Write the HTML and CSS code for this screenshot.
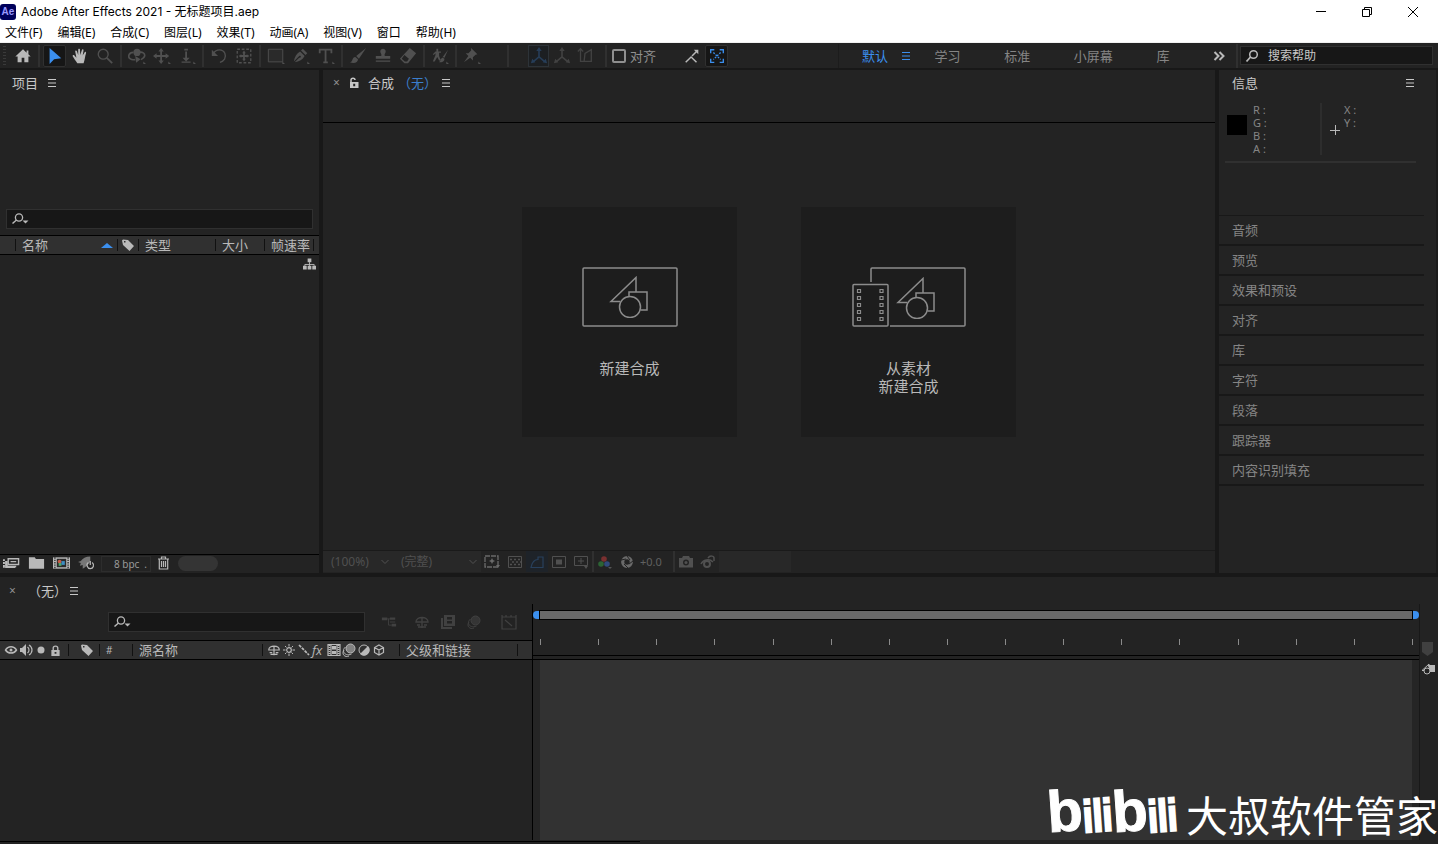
FILE: index.html
```html
<!DOCTYPE html>
<html lang="zh-CN">
<head>
<meta charset="utf-8">
<title>Adobe After Effects 2021 - 无标题项目.aep</title>
<link rel="stylesheet" href="styles.css">
</head>
<body>
<svg class="sprite" aria-hidden="true">
  <symbol id="menu" viewBox="0 0 10 10"><path d="M1 1.500h8M1 5h8M1 8.500h8" stroke="currentColor" fill="none"/></symbol>
  <symbol id="home" viewBox="0 0 20 20"><path fill="currentColor" d="M10 2.500 1.500 10.500H4V17h4.500v-5h3v5H16v-6.500h2.500L16 8.100V4h-2v2.300z"/></symbol>
  <symbol id="arrow" viewBox="0 0 20 20"><path fill="currentColor" d="M4 1v18l5-5.500 8-1z"/></symbol>
  <symbol id="hand" viewBox="0 0 20 20"><path fill="currentColor" d="M7 18C5 15 3.500 13 2 10.500c-.6-1.300 1-2 1.800-1L6 12 4.700 5c-.2-1.400 1.500-1.600 1.900-.3L8 9V3c0-1.500 2-1.500 2 0l.3 6L12 3.500c.4-1.400 2.100-1 1.900.4L13 9.500l2-3.500c.7-1.200 2.200-.4 1.700.9C15.500 10 15.500 14 14 18z"/></symbol>
  <symbol id="zoom" viewBox="0 0 20 20"><circle cx="8" cy="8" r="5.500" fill="none" stroke="currentColor" stroke-width="1.500"/><path d="m12 12 6 6" stroke="currentColor" stroke-width="2"/></symbol>
  <symbol id="orbit" viewBox="0 0 20 20"><path fill="none" stroke="currentColor" stroke-width="1.800" d="M8 14c-5 1-8-2-7-5 .8-2 3-3 5-3M12 6c4-1 7 1 6.500 4-.3 2-2 3-4 4"/><circle cx="10" cy="6" r="4" fill="currentColor"/><path fill="currentColor" d="m8 10 6 3.500-5 4zM17 19v-3l3 3z"/></symbol>
  <symbol id="move" viewBox="0 0 20 20"><path fill="currentColor" d="m9 1 3 4h-2v4h4V7l4 3-4 3v-2h-4v4h2l-3 4-3-4h2v-4H4v2l-4-3 4-3v2h4V5H6zM17 19v-3l3 3z"/></symbol>
  <symbol id="dolly" viewBox="0 0 20 20"><path fill="currentColor" d="M7 2h4v2H7zM8 5h2v7h3l-4 4-4-4h3zM4 16h10v1.500H4zM17 19v-3l3 3z"/></symbol>
  <symbol id="rotate" viewBox="0 0 20 20"><path fill="none" stroke="currentColor" stroke-width="1.500" d="M4 7c3-5 10-5 12.500 0 2 5-1 9-5.500 10"/><path fill="currentColor" d="M2 3v7h7z"/></symbol>
  <symbol id="behind" viewBox="0 0 20 20"><path fill="none" stroke="currentColor" stroke-width="1.500" stroke-dasharray="3 2" d="M2.500 2.500h15v15h-15z"/><path fill="currentColor" d="m10 4 2 3h-1v2h2V8l3 2-3 2v-1h-2v2h1l-2 3-2-3h1v-2H7v1l-3-2 3-2v1h2V7H8z"/></symbol>
  <symbol id="rect" viewBox="0 0 20 20"><path fill="#2a2a2a" stroke="currentColor" d="M1.500 2.500h16v14h-16z"/><path fill="currentColor" d="M17 19v-3l3 3z"/></symbol>
  <symbol id="pen" viewBox="0 0 20 20"><path fill="currentColor" d="m12 2 5 5-2 2-5-5zM9 5l5 5c-2 4-6 6-11 7l5-5c3 0 2-3 0-2l-6 6c1-5 3-9 7-11zM17 19v-3l3 3z"/></symbol>
  <symbol id="type" viewBox="0 0 20 20"><path fill="none" stroke="currentColor" stroke-width="2" d="M3 7V3h13v4M9.500 3v14M7 17h5"/><path fill="currentColor" d="M17 19v-3l3 3z"/></symbol>
  <symbol id="brush" viewBox="0 0 20 20"><path fill="currentColor" d="M19 1 8 10l3 3zM7 11c-4 0-2 5-6 6 5 2 9 0 9-3.500z"/></symbol>
  <symbol id="stamp" viewBox="0 0 20 20"><path fill="currentColor" d="M7 5c0-4 6-4 6 0 0 2-2 3-1 5h6v3H2v-3h6c1-2-1-3-1-5zM2 15h16v1.500H2z"/></symbol>
  <symbol id="eraser" viewBox="0 0 20 20"><path fill="currentColor" d="m12 1 7 6-9 11H6l-5-5zM6 9l-3 4 3.500 3H9l2-3z"/></symbol>
  <symbol id="roto" viewBox="0 0 20 20"><path fill="currentColor" d="M6 2h2v3h3v1.500H9V10l2 5H9l-2-4-3 5H2l3-7V7L3 9 2 8l3-3h1zM19 3l-6 8 2 1zM13 12c-2 0-2 3-4 5 4 0 6-1 6-4zM17 19v-3l3 3z"/></symbol>
  <symbol id="pin" viewBox="0 0 20 20"><path fill="currentColor" d="m9 1 7 7-2 .5-3 3V15l-3-3-7 5 5-7-3-3h3l3-3zM17 19v-3l3 3z"/></symbol>
  <symbol id="axis" viewBox="0 0 20 20"><path fill="none" stroke="currentColor" stroke-width="1.800" d="M10 3v8l-6 5M10 11l6 5"/><path fill="currentColor" d="m10 0 3 4.500H7zM1 18l1.500-5 3.500 4zM19 18l-5-1 3.500-4z"/></symbol>
  <symbol id="view" viewBox="0 0 20 20"><path fill="none" stroke="currentColor" stroke-width="1.500" d="M5 3v13h12V3l-7 4-1 9M2 5l3-3 3 3"/></symbol>
  <symbol id="snap" viewBox="0 0 20 20"><path fill="none" stroke="currentColor" stroke-width="1.600" d="m3 17 6-6 6 6M10 10l5-5"/><path fill="currentColor" d="M12 3h5v5z"/></symbol>
  <symbol id="bounds" viewBox="0 0 20 20"><path fill="none" stroke="currentColor" stroke-width="1.500" d="M3 7V3h4M13 3h4v4M17 13v4h-4M7 17H3v-4"/><path stroke="currentColor" stroke-width="1.500" stroke-dasharray="2 1.500" d="m6 6 8 8M14 6l-8 8"/></symbol>
  <symbol id="chev2" viewBox="0 0 12 10"><path fill="none" stroke="currentColor" stroke-width="2" d="m1.500 1 4 4-4 4M6.500 1l4 4-4 4"/></symbol>
  <symbol id="search" viewBox="0 0 14 14"><circle cx="8.500" cy="5.500" r="3.800" fill="none" stroke="currentColor" stroke-width="1.500"/><path d="M5.500 8 1.500 12.500" stroke="currentColor" stroke-width="1.800"/></symbol>
  <symbol id="searchd" viewBox="0 0 18 14"><circle cx="8" cy="5.500" r="3.600" fill="none" stroke="currentColor" stroke-width="1.300"/><path d="m5.500 8-4 3.500" stroke="currentColor" stroke-width="1.500"/><path fill="currentColor" d="M11.500 8.500h6l-3 3z"/></symbol>
  <symbol id="lock" viewBox="0 0 12 12"><path fill="none" stroke="currentColor" stroke-width="1.500" d="M3.500 6V3.500c0-3 5-3 5 0V6"/><path fill="currentColor" fill-rule="evenodd" d="M1.500 5.500h9V12h-9zM5 7.500v2h2v-2z"/></symbol>
  <symbol id="unlock" viewBox="0 0 12 12"><path fill="none" stroke="currentColor" stroke-width="1.500" d="M3 5.500V3c0-2.500 4-2.500 4 0"/><path fill="currentColor" fill-rule="evenodd" d="M2 5h8.500v6H2zM5.200 6.700v2.500h2V6.700z"/></symbol>
  <symbol id="tag" viewBox="0 0 12 12"><path fill="currentColor" fill-rule="evenodd" d="M0 1.500 1 .5 6 1l6 6-4.500 5L1 6zM2 2v1.500h1.500V2z"/></symbol>
  <symbol id="tree" viewBox="0 0 14 12"><path fill="currentColor" d="M5 0h4v4H5zM0 8h4v4H0zM5 8h4v4H5zM10 8h4v4h-4z"/><path fill="none" stroke="currentColor" d="M7 4v4M2 8V6.500h10V8"/></symbol>
  <symbol id="interpret" viewBox="0 0 18 14"><path fill="none" stroke="currentColor" stroke-width="1.500" d="M5.500 2.500h11v6h-11z"/><path fill="none" stroke="currentColor" stroke-width="1.500" d="M8 5.500h6M3 5v6.500h10"/><path fill="currentColor" d="M0 3h2v2H0zM0 6h2v2H0zM0 9h2v3H0zM3 5h2v5h9v1.500H3z"/></symbol>
  <symbol id="folder" viewBox="0 0 14 12"><path fill="currentColor" d="M.500 1h5l1 1.500H13.500V11H.500z"/></symbol>
  <symbol id="comp" viewBox="0 0 18 14"><path fill="currentColor" d="M0 1h18v12H0z"/><path fill="#2b2b2b" d="M4 2.500h10v9H4z"/><path stroke="#333" stroke-width="1.500" stroke-dasharray="1.500 1" d="M2 1v12M16 1v12"/><circle cx="7" cy="5.500" r="2" fill="#c45b45"/><path fill="#4fa66a" d="M6 7h3v3H6z"/><path fill="#3e8ec4" d="M9 5h3.500v4H9z"/></symbol>
  <symbol id="rocket" viewBox="0 0 18 14"><path fill="#777" d="M13 0C8 0 5 2 3 5L0 6l3 1-1 3 3-1v4c3-1 5-4 8-7z"/><path fill="none" stroke="currentColor" stroke-width="1.300" d="M11 6.500c-3 2-1 6.500 2 6.500s5-4 2-6.500M13 5v4"/></symbol>
  <symbol id="trash" viewBox="0 0 12 14"><path fill="none" stroke="currentColor" stroke-width="1.200" d="M.500 3h11M4 3V1h4v2M1.800 3v10h8.400V3M4 5v6M6 5v6M8 5v6"/></symbol>
  <symbol id="chev" viewBox="0 0 8 6"><path fill="none" stroke="currentColor" d="m.5 1 3.500 3.500L7.500 1"/></symbol>
  <symbol id="fastprev" viewBox="0 0 16 14"><path fill="none" stroke="currentColor" stroke-width="1.300" stroke-dasharray="5 1" d="M1 1h13v11H1z"/><path fill="currentColor" d="m8 3 1 2 2 1-2 1-1 2-1-2-2-1 2-1zM12 10h4l-2 3z"/></symbol>
  <symbol id="grid" viewBox="0 0 16 14"><path fill="none" stroke="currentColor" d="M1.500 1.500h13v11h-13z"/><path stroke="currentColor" stroke-width="1.500" stroke-dasharray="2 2" d="M3 4.500h11M5 7h9M3 9.500h11"/></symbol>
  <symbol id="mask" viewBox="0 0 16 14"><path fill="none" stroke="currentColor" stroke-width="1.200" d="M2 12.500c1-5 4-8 7-8V2h5v10.500z"/></symbol>
  <symbol id="roi" viewBox="0 0 16 14"><path fill="none" stroke="currentColor" d="M1.500 1.500h13v11h-13z"/><path fill="currentColor" d="M5 4.500h6v5H5z"/></symbol>
  <symbol id="guides" viewBox="0 0 16 14"><path fill="none" stroke="currentColor" d="M1.500 1.500h13v9h-13zM8 3v6M5 6h6"/><path fill="currentColor" d="M11 11h4l-2 3z"/></symbol>
  <symbol id="rgb" viewBox="0 0 16 14"><circle cx="7" cy="4" r="2.800" fill="#7a3030"/><circle cx="4" cy="9" r="2.800" fill="#2c6334"/><circle cx="10" cy="9" r="2.800" fill="#304a7c"/><path fill="#555" d="M11 12h4l-2 2z"/></symbol>
  <symbol id="aperture" viewBox="0 0 14 14"><circle cx="7" cy="7" r="4.300" fill="none" stroke="currentColor" stroke-width="3.200"/><path stroke="#232323" d="m1 5 5-1M7 1l3 4M13 6l-4 3M8 13l-4-4"/></symbol>
  <symbol id="camera" viewBox="0 0 16 14"><path fill="currentColor" fill-rule="evenodd" d="M1 3h3l1-2h6l1 2h3v9.500H1zM8 4.500a3 3 0 1 0 0 6 3 3 0 0 0 0-6z"/><circle cx="8" cy="7.500" r="1.500" fill="currentColor"/></symbol>
  <symbol id="snapshot" viewBox="0 0 16 14"><circle cx="7" cy="9" r="3" fill="none" stroke="currentColor" stroke-width="2"/><path fill="none" stroke="currentColor" stroke-width="1.500" d="M1 9c2-4 8-6 12-2M8 3c2-3 6-2 6 0v3"/></symbol>
  <symbol id="flow" viewBox="0 0 18 14"><path fill="currentColor" d="M1 2h6v3H1zM10 2h6v2.500h-6zM12 9h5v3h-5z"/><path fill="none" stroke="currentColor" d="M7 3.500h3M8.500 3.500v7H12M10 7h6"/></symbol>
  <symbol id="shy" viewBox="0 0 16 14"><path fill="none" stroke="currentColor" stroke-width="1.400" d="M2 7c0-6 12-6 12 0zM8 3v10M3 10h3M10 10h3M4 12h8"/></symbol>
  <symbol id="sun" viewBox="0 0 14 14"><circle cx="7" cy="7" r="2.300" fill="none" stroke="currentColor" stroke-width="1.200"/><path stroke="currentColor" d="M7 1v2.500M7 10.500V13M1 7h2.500M10.500 7H13M3 3l1.500 1.500M9.500 9.500 11 11M11 3 9.500 4.500M4.500 9.500 3 11"/></symbol>
  <symbol id="quality" viewBox="0 0 14 14"><path stroke="currentColor" stroke-width="1.700" stroke-dasharray="3 1" d="m2 2 10 10"/></symbol>
  <symbol id="frames" viewBox="0 0 14 14"><path fill="none" stroke="currentColor" stroke-width="1.200" d="M1 1.500h12v11H1zM4 1.500v11M10 1.500v11"/><path fill="currentColor" d="M5 3h4v3.500H5zM5 8h4v3H5z"/><path stroke="currentColor" stroke-dasharray="1 1" stroke-width="2" d="M2.500 2v10M11.500 2v10"/></symbol>
  <symbol id="blend" viewBox="0 0 16 14"><path fill="currentColor" d="M4 0h11v11H4zM1 3h2v9h9v2H1z"/><path fill="#232323" d="M7 2h5v2.500H7zM7 6h5v2.500H7z"/></symbol>
  <symbol id="blur" viewBox="0 0 14 14"><circle cx="8.500" cy="5.500" r="4.500" fill="currentColor" opacity=".6"/><circle cx="8.500" cy="5.500" r="4.500" fill="none" stroke="currentColor"/><path fill="none" stroke="currentColor" d="M3.500 4c-5 4 0 10 6 7M2 7c-3 4 1 8 5 6"/></symbol>
  <symbol id="adjust" viewBox="0 0 14 14"><circle cx="7" cy="7" r="5" fill="none" stroke="currentColor"/><path fill="currentColor" d="M11 3A5.600 5.600 0 1 1 3 11z"/></symbol>
  <symbol id="cube" viewBox="0 0 14 14"><path fill="none" stroke="currentColor" stroke-width="1.200" d="m7 2 4.500 2.500v5L7 12 2.500 9.500v-5zM2.500 4.500 7 7l4.500-2.500M7 7v5"/></symbol>
  <symbol id="graph" viewBox="0 0 18 16"><path fill="none" stroke="currentColor" stroke-width="1.200" d="M2 3h14v12H2zM2 1v2M6 1v2M11 1v2M16 1v2M5 6l7 6"/></symbol>
  <symbol id="eye" viewBox="0 0 14 14"><path fill="none" stroke="currentColor" stroke-width="1.500" d="M1.500 7C4 2.500 10 2.500 12.500 7 10 11 4 11 1.500 7z"/><circle cx="7" cy="7" r="1.500" fill="currentColor"/></symbol>
  <symbol id="sound" viewBox="0 0 14 14"><path fill="currentColor" d="M1 5h2l4-4v12L3 9H1z"/><path fill="none" stroke="currentColor" stroke-width="1.200" d="M8.500 4c2 1.500 2 4.500 0 6M10 2c4 2.500 4 7.500 0 10"/></symbol>
  <symbol id="dot" viewBox="0 0 14 14"><circle cx="7" cy="7" r="3.500" fill="currentColor"/></symbol>
  <symbol id="shapes" viewBox="0 0 40 42"><path fill="none" stroke="currentColor" stroke-width="1.500" d="M11 25.500H2L27 1.500V16M20 20v-4h18v18h-6.500"/><circle cx="21" cy="31" r="10.500" fill="none" stroke="currentColor" stroke-width="1.500"/></symbol>
</svg>

<header class="titlebar">
  <span class="app-badge">Ae</span>
  <h1 class="title">Adobe After Effects 2021 - 无标题项目.aep</h1>
  <div class="window-buttons">
    <button aria-label="最小化"><svg viewBox="0 0 12 12"><path d="M1 5.500h10"/></svg></button>
    <button aria-label="还原"><svg viewBox="0 0 12 12"><path d="M1.500 3.500h7v7h-7zM3.500 3.500v-2h7v7h-2"/></svg></button>
    <button aria-label="关闭"><svg viewBox="0 0 12 12"><path d="m1 1 10 10M11 1 1 11"/></svg></button>
  </div>
</header>
<nav class="menubar">
  <button>文件(F)</button><button>编辑(E)</button><button>合成(C)</button><button>图层(L)</button><button>效果(T)</button><button>动画(A)</button><button>视图(V)</button><button>窗口</button><button>帮助(H)</button>
</nav>

<div class="toolbar">
  <span class="grip"></span>
  <button class="tool lit" aria-label="主页"><svg><use href="#home"/></svg></button>
  <span class="sep"></span>
  <button class="tool active" aria-label="选取工具"><svg><use href="#arrow"/></svg></button>
  <button class="tool lit" aria-label="手形工具"><svg><use href="#hand"/></svg></button>
  <button class="tool" aria-label="缩放工具"><svg><use href="#zoom"/></svg></button>
  <span class="sep"></span>
  <button class="tool" aria-label="环绕工具"><svg><use href="#orbit"/></svg></button>
  <button class="tool" aria-label="平移工具"><svg><use href="#move"/></svg></button>
  <button class="tool" aria-label="推拉工具"><svg><use href="#dolly"/></svg></button>
  <span class="sep"></span>
  <button class="tool" aria-label="旋转工具"><svg><use href="#rotate"/></svg></button>
  <button class="tool" aria-label="锚点工具"><svg><use href="#behind"/></svg></button>
  <span class="sep"></span>
  <button class="tool" aria-label="矩形工具"><svg><use href="#rect"/></svg></button>
  <button class="tool" aria-label="钢笔工具"><svg><use href="#pen"/></svg></button>
  <button class="tool" aria-label="文字工具"><svg><use href="#type"/></svg></button>
  <span class="sep"></span>
  <button class="tool" aria-label="画笔工具"><svg><use href="#brush"/></svg></button>
  <button class="tool" aria-label="仿制图章工具"><svg><use href="#stamp"/></svg></button>
  <button class="tool" aria-label="橡皮擦工具"><svg><use href="#eraser"/></svg></button>
  <span class="sep"></span>
  <button class="tool" aria-label="Roto 笔刷工具"><svg><use href="#roto"/></svg></button>
  <span class="sep"></span>
  <button class="tool" aria-label="人偶位置控点工具"><svg><use href="#pin"/></svg></button>
  <div class="axes">
    <span class="sep"></span>
    <button class="axis pressed" aria-label="本地轴模式"><svg><use href="#axis"/></svg></button>
    <button class="axis" aria-label="世界轴模式"><svg><use href="#axis"/></svg></button>
    <button class="axis" aria-label="视图轴模式"><svg><use href="#view"/></svg></button>
  </div>
  <span class="sep"></span>
  <label class="snap"><input type="checkbox">对齐</label>
  <button class="tool lit" aria-label="对齐选项"><svg><use href="#snap"/></svg></button>
  <button class="tool active" aria-label="对齐边界"><svg><use href="#bounds"/></svg></button>
  <div class="workspaces">
    <button class="current">默认<svg><use href="#menu"/></svg></button>
    <button>学习</button><button>标准</button><button>小屏幕</button><button>库</button>
    <button class="more" aria-label="更多工作区"><svg><use href="#chev2"/></svg></button>
  </div>
  <label class="help"><svg><use href="#search"/></svg><input type="text" placeholder="搜索帮助" aria-label="搜索帮助"></label>
</div>

<main class="workspace">
  <section class="panel project">
    <header class="tab project-tab"><h2>项目</h2><svg class="burger"><use href="#menu"/></svg></header>
    <div class="preview"></div>
    <label class="search"><svg><use href="#searchd"/></svg><input type="text" aria-label="搜索项目"></label>
    <table class="columns">
      <colgroup><col class="w15"><col class="w102"><col class="w21"><col class="w77"><col class="w49"><col class="w49"><col></colgroup>
      <thead><tr><th></th><th><span class="sorted">名称<i></i></span></th><th class="tag-cell"><svg class="tag"><use href="#tag"/></svg></th><th>类型</th><th>大小</th><th>帧速率</th><th></th></tr></thead>
    </table>
    <div class="list"><svg><use href="#tree"/></svg></div>
    <footer class="project-foot">
      <button aria-label="解释素材"><svg><use href="#interpret"/></svg></button>
      <button aria-label="新建文件夹"><svg><use href="#folder"/></svg></button>
      <button aria-label="新建合成"><svg><use href="#comp"/></svg></button>
      <button aria-label="项目设置"><svg><use href="#rocket"/></svg></button>
      <button class="bpc"><span>8 bpc</span><span>.</span></button>
      <button class="delete" aria-label="删除"><svg><use href="#trash"/></svg></button>
      <span class="thumb"></span>
    </footer>
  </section>

  <section class="panel viewer">
    <header class="tab comp-tab"><button aria-label="关闭">×</button><svg class="unlock"><use href="#unlock"/></svg><h2>合成</h2><span class="none">（无）</span><svg class="burger"><use href="#menu"/></svg></header>
    <div class="cards">
      <button class="card">
        <svg width="96" height="60" viewBox="0 0 96 60"><rect x="1" y="1" width="94" height="58" rx="1" fill="none" stroke="currentColor" stroke-width="1.500"/><use href="#shapes" x="27" y="9" width="40" height="42"/></svg>
        <span>新建合成</span>
      </button>
      <button class="card">
        <svg width="114" height="60" viewBox="0 0 114 60"><g fill="none" stroke="currentColor" stroke-width="1.500"><path d="M19 15V2q0-1 1-1h92q1 0 1 1v56q0 1-1 1H38"/><rect x="1" y="17.500" width="35" height="41.500" rx="1"/><path stroke-width="1.200" d="M5.500 22.500h3v3h-3zM5.500 29.500h3v3h-3zM5.500 36.500h3v3h-3zM5.500 43.500h3v3h-3zM5.500 50.500h3v3h-3zM28 22.500h3v3h-3zM28 29.500h3v3h-3zM28 36.500h3v3h-3zM28 43.500h3v3h-3zM28 50.500h3v3h-3z"/></g><use href="#shapes" x="44" y="10" width="40" height="42"/></svg>
        <span>从素材<br>新建合成</span>
      </button>
    </div>
    <footer class="viewer-foot">
      <div class="picker zoom-picker"><select aria-label="放大率"><option>(100%)</option></select><svg><use href="#chev"/></svg></div>
      <div class="picker res-picker"><select aria-label="分辨率"><option>(完整)</option></select><svg><use href="#chev"/></svg></div>
      <button class="bright fast" aria-label="快速预览"><svg><use href="#fastprev"/></svg></button>
      <button aria-label="透明网格"><svg><use href="#grid"/></svg></button>
      <button class="on" aria-label="蒙版可见性"><svg><use href="#mask"/></svg></button>
      <button aria-label="目标区域"><svg><use href="#roi"/></svg></button>
      <button aria-label="参考线"><svg><use href="#guides"/></svg></button>
      <span class="rule"></span>
      <button aria-label="通道"><svg><use href="#rgb"/></svg></button>
      <button class="bright" aria-label="重置曝光度"><svg><use href="#aperture"/></svg></button>
      <span class="exposure">+0.0</span>
      <span class="rule"></span>
      <button aria-label="拍摄快照"><svg><use href="#camera"/></svg></button>
      <button aria-label="显示快照"><svg><use href="#snapshot"/></svg></button>
      <span class="time"></span>
    </footer>
  </section>

  <aside class="panel side">
    <header class="tab side-tab"><h2>信息</h2><svg class="burger"><use href="#menu"/></svg></header>
    <div class="info">
      <span class="swatch"></span>
      <div class="channels"><span>R :</span><span>G :</span><span>B :</span><span>A :</span></div>
      <svg class="plus" viewBox="0 0 10 10"><path d="M0 5.500h10M5.500 0v10" stroke="currentColor"/></svg>
      <div class="channels"><span>X :</span><span>Y :</span></div>
    </div>
    <ul class="stack">
      <li><button>音频</button></li><li><button>预览</button></li><li><button>效果和预设</button></li><li><button>对齐</button></li><li><button>库</button></li><li><button>字符</button></li><li><button>段落</button></li><li><button>跟踪器</button></li><li><button>内容识别填充</button></li>
    </ul>
  </aside>
</main>

<section class="timeline">
  <header class="tab time-tab"><button aria-label="关闭">×</button><h2>（无）</h2><svg class="burger"><use href="#menu"/></svg></header>
  <div class="time-body">
    <div class="layers">
      <div class="layer-tools">
        <label class="search"><svg><use href="#searchd"/></svg><input type="text" aria-label="搜索图层"></label>
        <button class="flow" aria-label="合成微型流程图"><svg><use href="#flow"/></svg></button>
        <button aria-label="隐藏图层"><svg><use href="#shy"/></svg></button>
        <button aria-label="帧混合"><svg><use href="#blend"/></svg></button>
        <button aria-label="运动模糊"><svg><use href="#blur"/></svg></button>
        <button class="graph" aria-label="图表编辑器"><svg><use href="#graph"/></svg></button>
      </div>
      <table class="columns">
        <colgroup><col class="w68"><col class="w31"><col class="w33"><col class="w130"><col class="w137"><col class="w118"><col></colgroup>
        <thead><tr>
          <th class="icons"><span><svg><use href="#eye"/></svg><svg><use href="#sound"/></svg><svg><use href="#dot"/></svg><svg class="lock"><use href="#lock"/></svg></span></th>
          <th class="centered"><svg class="tag"><use href="#tag"/></svg></th><th class="hash">#</th><th>源名称</th>
          <th class="icons switches"><span><svg><use href="#shy"/></svg><svg><use href="#sun"/></svg><svg><use href="#quality"/></svg><em>fx</em><svg><use href="#frames"/></svg><svg><use href="#blur"/></svg><svg><use href="#adjust"/></svg><svg><use href="#cube"/></svg></span></th>
          <th>父级和链接</th><th></th>
        </tr></thead>
      </table>
    </div>
    <div class="tracks">
      <div class="workbar"><i class="cap start"></i><div class="range"></div><i class="cap end"></i></div>
      <div class="ruler"><i></i><i></i><i></i><i></i><i></i><i></i><i></i><i></i><i></i><i></i><i></i><i></i><i></i><i></i><i></i><i></i></div>
      <div class="track-area"></div>
    </div>
    <div class="gutter">
      <svg class="marker" viewBox="0 0 12 14"><path fill="#404040" d="M0 0h11v10l-5.500 4L0 10z"/></svg>
      <svg class="comp-button" viewBox="0 0 14 12"><path fill="currentColor" d="M7 2h7v7H9z"/><path fill="none" stroke="currentColor" d="M3 7.500H1L8 1v3"/><circle cx="6" cy="8" r="3" fill="#232323" stroke="currentColor"/></svg>
    </div>
  </div>
  <div class="progress"></div>
</section>

<div class="watermark">
  <span class="brand" aria-label="bilibili"><b>b</b><i>ili</i><b>b</b><i>ili</i></span>
  <span class="author">大叔软件管家</span>
</div>
</body>
</html>
```
FILE: styles.css
```css
* { box-sizing: border-box; }

body {
  margin: 0;
  min-height: 100vh;
  display: flex;
  flex-direction: column;
  position: relative;
  overflow: hidden;
  background: #181818;
  color: #b9b9b9;
  font: 13px/16px "Noto Sans", "Noto Sans CJK SC", sans-serif;
  text-spacing-trim: space-all;
}

h1, h2 { margin: 0; font-size: 13px; font-weight: 400; }
button, input, select {
  margin: 0;
  padding: 0;
  border: 0;
  background: none;
  color: inherit;
  font: inherit;
  outline: 0;
}
svg { display: block; flex: none; }
.sprite { position: absolute; width: 0; height: 0; }

/* Window chrome */
.titlebar {
  display: flex;
  align-items: center;
  height: 23px;
  background: #fff;
  color: #000;
}
.app-badge {
  width: 16px;
  height: 16px;
  margin-right: 5px;
  border-radius: 3px;
  background: #00005b;
  color: #9999ff;
  font: bold 10px/16px "Liberation Sans", sans-serif;
  text-align: center;
}
.title { font: 12px/23px Inter, "Noto Sans CJK SC", sans-serif; }
.window-buttons { display: flex; margin-left: auto; padding-right: 2px; }
.window-buttons button { display: flex; justify-content: center; align-items: center; width: 46px; height: 21px; }
.window-buttons svg { width: 12px; height: 12px; fill: none; stroke: #000; }

.menubar {
  display: flex;
  gap: 15px;
  height: 20px;
  padding-left: 5px;
  background: #fff;
  border-bottom: 1px solid #f0f0f0;
  color: #000;
  font-size: 12px;
}

/* Tool bar */
.toolbar {
  display: flex;
  align-items: center;
  height: 27px;
  background: #232323;
  border-bottom: 2px solid #181818;
}
.grip { width: 3px; height: 20px; margin: 0 4px 0 3px; background: repeating-linear-gradient(#3a3a3a 0 1px, #232323 1px 3px); }
.sep { display: flex; justify-content: center; width: 7px; height: 22px; flex: none; }
.sep::before { content: ""; width: 2px; background: #303030; }
.tool { display: flex; align-items: center; justify-content: center; width: 25px; height: 22px; color: #505050; flex: none; }
.tool svg { width: 18px; height: 18px; }
.tool.lit { color: #b9b9b9; }
.tool.active { color: #3b8fee; background: #161616; border: 1px solid #303030; border-radius: 2px; width: 23px; margin: 0 1px; }
.axes { display: flex; align-items: center; margin: 0 6px 0 20px; color: #424242; }
.axes .sep { margin-right: 16px; }
.axis { display: flex; align-items: center; justify-content: center; width: 23px; height: 22px; }
.axis svg { width: 18px; height: 18px; }
.axis.pressed { color: #263d58; background: #1c1f22; border: 1px solid #2d3338; width: 21px; margin: 0 1px; }
.snap { display: flex; align-items: center; gap: 4px; margin: 0 23px 0 3px; color: #8f8f8f; white-space: nowrap; }
.snap input { appearance: none; width: 14px; height: 14px; margin-top: 1px; border: 2px solid #8f8f8f; border-radius: 2px; }
.workspaces {
  display: flex;
  align-items: center;
  justify-content: space-between;
  flex: 1;
  max-width: 400px;
  height: 24px;
  margin-left: auto;
  padding: 0 11px 0 23px;
  border-left: 1px solid #1c1c1c;
  border-right: 2px solid #303030;
  color: #858585;
}
.workspaces .current { display: flex; align-items: center; gap: 13px; margin-right: -20px; color: #3b8fee; }
.workspaces button { white-space: nowrap; }
.workspaces .current svg { width: 10px; height: 10px; }
.workspaces .more { color: #b9b9b9; }
.more svg { width: 12px; height: 10px; }
.help {
  display: flex;
  align-items: center;
  gap: 9px;
  width: 193px;
  height: 19px;
  margin: 0 5px 0 2px;
  padding-left: 4px;
  background: #171717;
  border: 1px solid #303030;
  font-size: 12px;
}
.help svg { width: 14px; height: 14px; }
.help input { flex: 1; min-width: 0; }
.help input::placeholder { color: #c8c8c8; }

/* Panels */
.workspace { display: flex; gap: 4px; flex: 1; min-height: 503px; }
.panel { display: flex; flex-direction: column; background: #232323; }
.tab { display: flex; align-items: center; height: 27px; padding-left: 12px; color: #c8c8c8; flex: none; }
.tab button { font-size: 12px; color: #909090; }
.burger { width: 10px; height: 10px; margin-left: 9px; }
.project { width: 319px; }
.project-tab { padding-bottom: 1px; }
.preview { height: 112px; }
.search {
  display: flex;
  align-items: center;
  height: 20px;
  margin: 0 6px;
  padding-left: 4px;
  background: #171717;
  border: 1px solid #303030;
}
.search svg { width: 18px; height: 14px; }
.search input { flex: 1; min-width: 0; }

.columns { width: 100%; table-layout: fixed; border-collapse: collapse; background: #303030; border-top: 1px solid #000; border-bottom: 1px solid #000; }
.project .columns { margin-top: 6px; }
.columns th { height: 19px; padding: 0 0 0 7px; font-weight: 400; text-align: left; white-space: nowrap; color: #b9b9b9; background: linear-gradient(#111, #111) left center / 1px 12px no-repeat; }
.columns th:first-child { background: none; }
.columns svg { width: 14px; height: 14px; }
.columns .tag { width: 12px; height: 12px; }
.columns .tag-cell { padding-left: 5px; }
.columns .centered { padding-left: 13px; }
.sorted { display: flex; justify-content: space-between; align-items: center; padding-right: 4px; }
.sorted i { border: 6px solid transparent; border-top: 0; border-bottom: 5px solid #3b8fee; }
.columns .hash { font-size: 10px; }
.columns .icons { padding: 0 0 0 4px; }
.columns .switches { padding-left: 5px; }
.icons span { display: flex; align-items: center; gap: 1px; }
.icons em { width: 14px; font: italic 13px/14px "Open Sans", sans-serif; }
.columns .lock { width: 11px; height: 11px; margin-left: 1px; }
.w15 { width: 15px; } .w102 { width: 102px; } .w21 { width: 21px; } .w77 { width: 77px; } .w49 { width: 49px; }
.w68 { width: 68px; } .w31 { width: 31px; } .w33 { width: 33px; } .w130 { width: 130px; } .w137 { width: 137px; } .w118 { width: 118px; }

.list { flex: 1; display: flex; justify-content: flex-end; padding: 3px 3px 0 0; }
.list svg { width: 13px; height: 12px; }
.project-foot { display: flex; align-items: flex-start; height: 19px; gap: 8px; padding: 1px 0 0 3px; border-top: 1px solid #000; }
.project-foot svg { width: 17px; height: 14px; }
.project-foot .bpc { display: flex; justify-content: space-between; width: 50px; margin-left: -2px; padding: 0 3px 0 12px; border: 1px solid #2d2d2d; font-size: 10px; line-height: 14px; color: #9a9a9a; white-space: nowrap; }
.project-foot .delete { margin-left: -4px; }
.thumb { width: 40px; height: 15px; margin-left: -2px; border-radius: 8px; background: #343434; }

.viewer { flex: 1; min-width: 0; }
.comp-tab { height: 53px; padding: 0 0 26px 10px; border-bottom: 1px solid #000; }
.comp-tab .burger { margin-left: 4px; }
.unlock { width: 12px; height: 12px; margin: 0 8px; }
.none { margin-left: 4px; color: #3b7fce; }
.cards { flex: 1; display: flex; align-items: center; justify-content: center; gap: 64px; padding-bottom: 29px; }
.card { display: flex; flex-direction: column; align-items: center; gap: 32px; width: 215px; height: 230px; padding-top: 60px; background: #1d1d1d; color: #8c8c8c; }
.card span { font-size: 15px; line-height: 18px; color: #b9b9b9; }

.viewer-foot { display: flex; align-items: flex-start; height: 23px; border-top: 1px solid #1a1a1a; color: #505050; font-size: 12px; }
.viewer-foot button { display: flex; align-items: center; justify-content: center; width: 22px; height: 21px; }
.viewer-foot svg { width: 16px; height: 14px; }
.viewer-foot .bright { color: #6a6a6a; }
.viewer-foot .fast { margin-right: 1px; }
.viewer-foot .on { background: #1e2329; color: #28405c; }
.picker { display: flex; align-items: center; justify-content: space-between; height: 21px; padding: 0 4px 0 8px; background: #282828; }
.picker select { appearance: none; }
.viewer-foot .picker svg { width: 8px; height: 6px; }
.zoom-picker { width: 70px; }
.res-picker { width: 88px; }
.rule { width: 2px; height: 21px; background: #303030; }
.exposure { width: 35px; padding-left: 2px; font-size: 11px; line-height: 21px; color: #606060; }
.time { width: 72px; height: 21px; background: #282828; }

.side { width: 219px; border-right: 2px solid #1b1b1b; }
.side-tab { justify-content: space-between; padding: 0 21px 1px 13px; }
.info { display: flex; height: 66px; margin: 0 20px 52px 6px; padding: 6px 0 0 2px; border-bottom: 2px solid #303030; font-size: 11px; line-height: 13px; color: #858585; }
.swatch { width: 20px; height: 20px; margin: 12px 6px 0 0; background: #000; }
.channels { display: flex; flex-direction: column; }
.swatch + .channels { width: 69px; height: 52px; border-right: 2px solid #2d2d2d; }
.plus { width: 10px; height: 10px; margin: 22px 4px 0 8px; color: #b9b9b9; }
.stack { margin: 0 12px 0 0; padding: 0; list-style: none; border-top: 1px solid #181818; }
.stack button { display: block; width: 100%; height: 30px; padding-left: 13px; border-bottom: 2px solid #181818; text-align: left; color: #858585; }

/* Timeline */
.timeline { display: flex; flex-direction: column; height: 271px; border-top: 4px solid #181818; background: #232323; }
.time-tab { padding-left: 9px; }
.time-tab h2 { margin-left: 12px; }
.time-tab .burger { margin-left: 2px; }
.time-body { display: flex; flex: 1; }
.layers { width: 533px; border-right: 1px solid #000; }
.layer-tools { display: flex; align-items: center; height: 36px; color: #414141; }
.layer-tools .search { width: 257px; margin: 0 16px 0 108px; color: #b9b9b9; }
.layer-tools button { width: 26px; }
.layer-tools svg { width: 16px; height: 14px; }
.layer-tools .search svg { width: 18px; }
.layer-tools .flow { width: 33px; }
.layer-tools .graph { margin-left: 8px; }
.layer-tools .graph svg { width: 18px; height: 16px; }
.tracks { flex: 1; display: flex; flex-direction: column; min-width: 0; padding-top: 6px; }
.workbar { display: flex; height: 10px; }
.range { flex: 1; background: #686868; border: 1px solid #000; }
.cap { width: 6px; height: 8px; margin-top: 1px; background: #3b8fee; }
.start { border-radius: 5px 0 0 5px; }
.end { border-radius: 0 5px 5px 0; }
.ruler { display: flex; justify-content: space-between; height: 36px; padding: 19px 6px 0 7px; border-bottom: 1px solid #000; }
.ruler i { width: 1px; height: 6px; background: #8a8a8a; }
.track-area { flex: 1; margin-top: 4px; border: solid #252525; border-width: 0 7px; background: #323232; box-shadow: 0 -1px #000; }
.gutter { display: flex; flex-direction: column; align-items: center; gap: 7px; width: 19px; padding: 38px 3px 0 0; border-left: 1px solid #181818; }
.marker { width: 12px; height: 14px; }
.comp-button { width: 14px; height: 12px; }
.progress { height: 4px; background: linear-gradient(#000, #000) 0 1px / 640px 1px no-repeat #232323; }

/* Overlay mark */
.watermark { position: absolute; right: 0; bottom: 0; display: flex; align-items: flex-end; color: #fff; pointer-events: none; }
.brand { display: flex; align-items: baseline; margin-right: 9px; font-family: "Liberation Sans", sans-serif; }
.brand b, .brand i { font-style: normal; transform: rotate(-4deg); }
.brand b { font-size: 58px; line-height: 66px; -webkit-text-stroke: 1px #fff; }
.brand i { font-size: 44px; line-height: 50px; -webkit-text-stroke: 3px #fff; }
.author { font-size: 42px; line-height: 56px; }
```
